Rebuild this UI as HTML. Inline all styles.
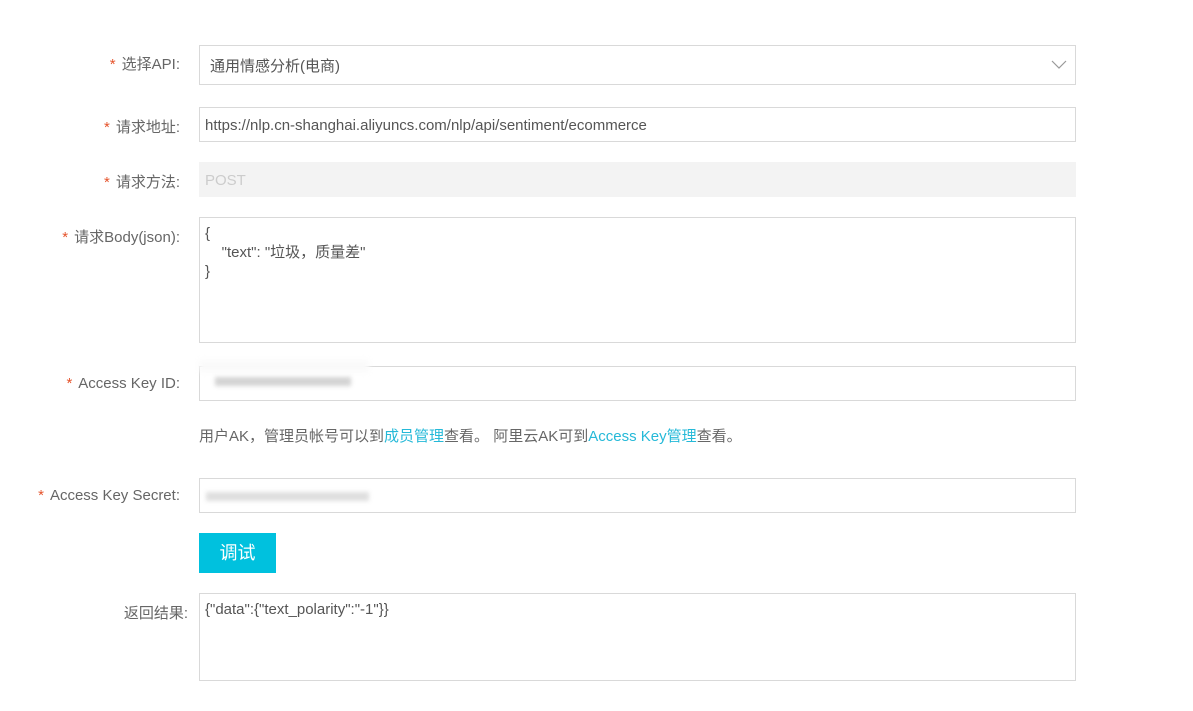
<!DOCTYPE html>
<html><head><meta charset="utf-8"><style>
body{margin:0;width:1193px;height:711px;background:#fff;font-family:"Liberation Sans","Noto Sans CJK SC",sans-serif;font-size:15px;color:#555;position:relative;overflow:hidden}
.a{position:absolute}
.lbl{position:absolute;right:1013px;text-align:right;white-space:nowrap;color:#666}
.lbl i{font-style:normal;color:#e5532b;margin-right:6px}
.box{position:absolute;left:199px;width:877px;border:1px solid #d9d9d9;box-sizing:border-box;background:#fff}
.t{position:absolute;left:5px;white-space:pre;color:#555}
.blur{position:absolute;background:#c9c9c9;filter:blur(2px);opacity:.8}
a{color:#25b9d8;text-decoration:none}
</style></head><body>
<div class="lbl" style="top:53px"><i>*</i>选择API:</div>
<div class="box" style="top:45px;height:40px"><span class="t" style="left:10px;top:9px">通用情感分析(电商)</span>
<svg class="a" style="left:851px;top:12px" width="16" height="12"><path d="M1 3l7 7 7-7" fill="none" stroke="#999" stroke-width="1.2"/></svg></div>

<div class="lbl" style="top:116px"><i>*</i>请求地址:</div>
<div class="box" style="top:107px;height:35px"><span class="t" style="top:9px">https://nlp.cn-shanghai.aliyuncs.com/nlp/api/sentiment/ecommerce</span></div>

<div class="lbl" style="top:171px"><i>*</i>请求方法:</div>
<div class="box" style="top:162px;height:35px;background:#f3f3f3;border-color:#f3f3f3"><span class="t" style="top:9px;color:#ccc">POST</span></div>

<div class="lbl" style="top:226px"><i>*</i>请求Body(json):</div>
<div class="box" style="top:217px;height:126px"><span class="t" style="top:6px;line-height:19px">{
    "text": "垃圾，质量差"
}</span></div>

<div class="lbl" style="top:375px"><i>*</i>Access Key ID:</div>
<div class="box" style="top:366px;height:35px"></div>
<div class="blur" style="left:215px;top:377px;width:136px;height:9px"></div>
<div class="a" style="left:199px;top:360px;width:170px;height:12px;background:#fafafa;filter:blur(3px)"></div>

<div class="a" style="left:199px;top:425px;color:#666">用户AK，管理员帐号可以到<a>成员管理</a>查看。 阿里云AK可到<a>Access Key管理</a>查看。</div>

<div class="lbl" style="top:487px"><i>*</i>Access Key Secret:</div>
<div class="box" style="top:478px;height:35px"></div>
<div class="blur" style="left:206px;top:492px;width:163px;height:9px;opacity:.6"></div>

<div class="a" style="left:199px;top:533px;width:77px;height:40px;background:#00c1de;color:#fff;font-size:18px;text-align:center;line-height:40px">调试</div>

<div class="lbl" style="top:602px;right:1005px">返回结果:</div>
<div class="box" style="top:593px;height:88px"><span class="t" style="top:7px">{"data":{"text_polarity":"-1"}}</span></div>
</body></html>
